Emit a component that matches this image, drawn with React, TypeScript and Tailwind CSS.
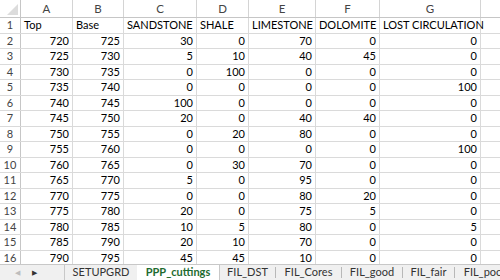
import React from "react";

const cols = [
  { l: "A", w: 52 },
  { l: "B", w: 51 },
  { l: "C", w: 73 },
  { l: "D", w: 52 },
  { l: "E", w: 67 },
  { l: "F", w: 64 },
  { l: "G", w: 101 },
  { l: "", w: 40 },
];

const header = ["Top", "Base", "SANDSTONE", "SHALE", "LIMESTONE", "DOLOMITE", "LOST CIRCULATION"];
const data: number[][] = [
  [720, 725, 30, 0, 70, 0, 0],
  [725, 730, 5, 10, 40, 45, 0],
  [730, 735, 0, 100, 0, 0, 0],
  [735, 740, 0, 0, 0, 0, 100],
  [740, 745, 100, 0, 0, 0, 0],
  [745, 750, 20, 0, 40, 40, 0],
  [750, 755, 0, 20, 80, 0, 0],
  [755, 760, 0, 0, 0, 0, 100],
  [760, 765, 0, 30, 70, 0, 0],
  [765, 770, 5, 0, 95, 0, 0],
  [770, 775, 0, 0, 80, 20, 0],
  [775, 780, 20, 0, 75, 5, 0],
  [780, 785, 10, 5, 80, 0, 5],
  [785, 790, 20, 10, 70, 0, 0],
  [790, 795, 45, 45, 10, 0, 0],
];

const tabs = [
  { n: "SETUPGRD", w: 72 },
  { n: "PPP_cuttings", w: 83, active: true },
  { n: "FIL_DST", w: 56 },
  { n: "FIL_Cores", w: 66 },
  { n: "FIL_good", w: 61 },
  { n: "FIL_fair", w: 52 },
  { n: "FIL_poor", w: 60 },
];

export default function App() {
  return (
    <div
      className="w-[500px] h-[280px] overflow-hidden bg-white flex flex-col text-[11px] text-black"
      style={{ fontFamily: "Lato, 'Liberation Sans', sans-serif" }}
    >
      <div className="h-[264px] overflow-hidden shrink-0">
        <div className="flex h-[18px] border-b border-[#c6c6c6] bg-white">
          <div className="w-[21px] shrink-0 border-r border-[#c6c6c6] relative">
            <svg className="absolute right-[2px] bottom-[2px]" width="11" height="11" viewBox="0 0 11 11">
              <polygon points="11,0 11,11 0,11" fill="#dcdcdc" />
            </svg>
          </div>
          {cols.map((c, i) => (
            <div
              key={i}
              className="shrink-0 border-r border-[#d4d4d4] flex items-center justify-center text-[#444] text-[11.5px]"
              style={{ width: c.w }}
            >
              {c.l}
            </div>
          ))}
        </div>
        <div className="flex h-[15.5px] border-b border-[#dadada]">
          <div className="w-[21px] shrink-0 border-r border-[#c6c6c6] flex items-center justify-center text-[#444]">1</div>
          {cols.map((c, i) => (
            <div
              key={i}
              className="shrink-0 border-r border-[#dadada] flex items-center pl-[3px] whitespace-nowrap"
              style={{ width: c.w }}
            >
              {header[i] ?? ""}
            </div>
          ))}
        </div>
        {data.map((r, ri) => (
          <div key={ri} className="flex h-[15.5px] border-b border-[#dadada]">
            <div className="w-[21px] shrink-0 border-r border-[#c6c6c6] flex items-center justify-center text-[#444]">
              {ri + 2}
            </div>
            {cols.map((c, i) => (
              <div
                key={i}
                className="shrink-0 border-r border-[#dadada] flex items-center justify-end pr-[3px]"
                style={{ width: c.w }}
              >
                {r[i] !== undefined ? r[i] : ""}
              </div>
            ))}
          </div>
        ))}
      </div>
      <div className="h-[16px] flex bg-[#f0f0f0] border-t border-[#c8c8c8] text-[#333] text-[11px] overflow-hidden">
        <div className="w-[65px] shrink-0 flex items-center pl-[15px] gap-[12px] border-r border-[#c8c8c8]">
          <span className="text-[#bdbdbd] text-[7px]">◀</span>
          <span className="text-[#333] text-[7px]">▶</span>
        </div>
        {tabs.map((t, i) => (
          <div
            key={i}
            className={
              t.active
                ? "shrink-0 flex items-center justify-center bg-white -mt-px text-[#1e6b30] font-bold border-r border-[#c8c8c8] whitespace-nowrap"
                : "shrink-0 flex items-center justify-center whitespace-nowrap"
            }
            style={{ width: t.w }}
          >
            <span className="flex-1 text-center">{t.n}</span>
            {!t.active && i !== 0 && i < tabs.length - 1 ? (
              <span className="w-px h-[11px] bg-[#b8b8b8]" />
            ) : null}
          </div>
        ))}
      </div>
    </div>
  );
}
